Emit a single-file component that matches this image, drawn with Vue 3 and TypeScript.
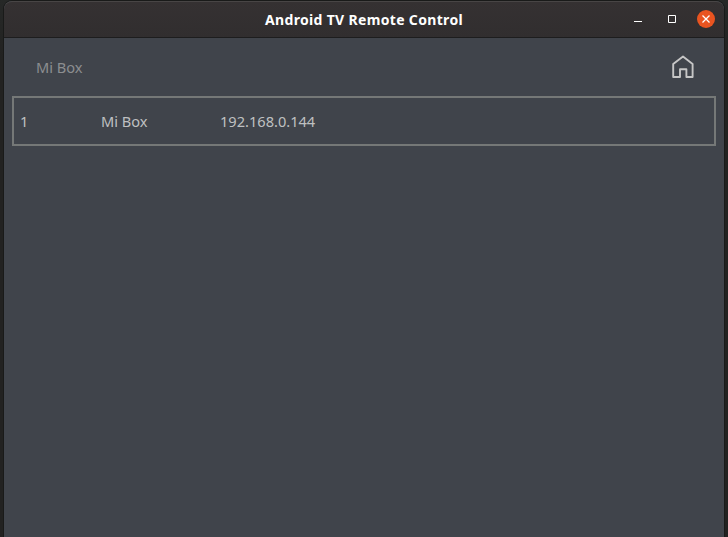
<script setup lang="ts">
interface Device {
  id: number
  name: string
  address: string
}

const title = 'Android TV Remote Control'
const devices: Device[] = [{ id: 1, name: 'Mi Box', address: '192.168.0.144' }]
const current = devices[0].name
</script>

<template>
  <div class="desktop">
    <main class="window">
      <header class="titlebar">
        <h1 class="title">{{ title }}</h1>
        <div class="controls">
          <button class="control" aria-label="Minimize">
            <svg width="8" height="8" viewBox="0 0 8 8"><path d="M0 6h8v1H0z" fill="#fff" /></svg>
          </button>
          <button class="control" aria-label="Maximize">
            <svg width="8" height="8" viewBox="0 0 8 8"><path d="M.5.5h7v7h-7z" fill="none" stroke="#fff" /></svg>
          </button>
          <button class="control close" aria-label="Close">
            <svg width="8" height="8" viewBox="0 0 8 8"><path d="M.5.5l7 7M7.5.5l-7 7" fill="none" stroke="#fff" stroke-width="1.3" /></svg>
          </button>
        </div>
      </header>
      <section class="toolbar">
        <span class="current">{{ current }}</span>
        <button class="home" aria-label="Home">
          <svg width="22" height="24" viewBox="0 0 22 24">
            <path d="M1.2 8.9L11 1.4l9.6 7.5V22h-6.2v-7.8H8V22H1.2z" fill="none" stroke="#c6c6c6" stroke-width="1.9" stroke-linejoin="round" />
          </svg>
        </button>
      </section>
      <ul class="devices">
        <li v-for="device in devices" :key="device.id" class="device">
          <span class="number">{{ device.id }}</span>
          <span class="name">{{ device.name }}</span>
          <span class="address">{{ device.address }}</span>
        </li>
      </ul>
    </main>
  </div>
</template>

<style>
body {
  background: #222221;
}
</style>

<style scoped>
.desktop {
  box-sizing: border-box;
  height: 537px;
  padding: 1px 4px 0;
  overflow: hidden;
  background: linear-gradient(#262827, #222221 60px);
  font-family: "Noto Sans", "Open Sans", sans-serif;
  font-size: 14.6px;
}
.window {
  height: 536px;
  overflow: hidden;
  border-radius: 8px 8px 0 0;
  background: #40444b;
  box-shadow: 0 0 0 1px #191a19;
}
.titlebar {
  box-sizing: border-box;
  display: grid;
  grid-template-columns: 1fr auto 1fr;
  align-items: center;
  height: 37px;
  padding-right: 9px;
  border-top: 1px solid #484545;
  border-bottom: 1px solid #1d1d1e;
  border-radius: 8px 8px 0 0;
  background: linear-gradient(#353132, #312e2f);
}
.title {
  grid-column: 2;
  margin: 0 0 0 9px;
  color: #fff;
  font-size: 14px;
  font-weight: 700;
  letter-spacing: 0.33px;
  line-height: 20px;
  white-space: nowrap;
}
.controls {
  display: flex;
  justify-content: flex-end;
  gap: 16px;
  padding-bottom: 1px;
}
.control {
  display: flex;
  align-items: center;
  justify-content: center;
  width: 18px;
  height: 18px;
  padding: 0;
  border: 0;
  border-radius: 50%;
  background: none;
}
.close {
  background: #e95420;
}
.toolbar {
  display: flex;
  align-items: center;
  justify-content: space-between;
  height: 58px;
  padding: 0 30px 0 32px;
}
.current {
  color: #8c8e90;
}
.home {
  display: flex;
  padding: 0;
  border: 0;
  background: none;
}
.devices {
  margin: 0;
  padding: 0 8px;
  list-style: none;
}
.device {
  box-sizing: border-box;
  display: grid;
  grid-template-columns: 81px 119px 1fr;
  align-items: center;
  height: 50px;
  padding-left: 6px;
  border: 2px solid #757877;
  color: #bfc0c1;
}
</style>
